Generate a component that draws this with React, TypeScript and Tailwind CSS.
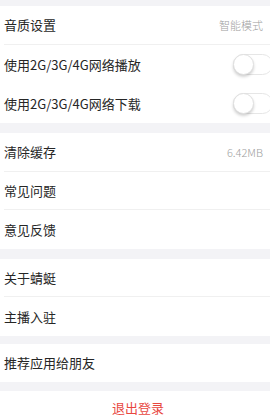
import React from 'react';

const font = { fontFamily: '"Noto Sans CJK SC", "Noto Sans", sans-serif' };

function Toggle() {
  return (
    <div className="relative w-[40px] h-[21px] mr-[-10px] rounded-full border border-[#e6e6e6] bg-white">
      <div className="absolute left-[-1px] top-[-1px] w-[21px] h-[21px] rounded-full bg-white border border-[#e0e0e0] shadow-[0_2px_3px_rgba(0,0,0,0.18)]" />
    </div>
  );
}

function Row({ label, right, toggle, last, h = 'h-[38.5px]' }: { label: string; right?: string; toggle?: boolean; last?: boolean; h?: string }) {
  return (
    <div className="pl-[4px] bg-white">
      <div className={`${h} flex items-center justify-between pr-[7px] ${last ? '' : 'border-b border-[#f0f0f0]'}`}>
        <span className="text-[13px] text-[#262626]">{label}</span>
        {right && <span className="text-[11px] text-[#a0a0a0] font-light">{right}</span>}
        {toggle && <Toggle />}
      </div>
    </div>
  );
}

export default function App() {
  return (
    <div className="w-[270px] h-[419px] overflow-hidden bg-[#f3f3f6]" style={font}>
      <div className="h-[6px]" />
      <Row label="音质设置" right="智能模式" h="h-[39px]" />
      <Row label="使用2G/3G/4G网络播放" toggle last h="h-[39px]" />
      <Row label="使用2G/3G/4G网络下载" toggle last h="h-[39px]" />

      <div className="h-[10px]" />
      <Row label="清除缓存" right="6.42MB" />
      <Row label="常见问题" />
      <Row label="意见反馈" last />

      <div className="h-[10px]" />
      <Row label="关于蜻蜓" />
      <Row label="主播入驻" last />

      <div className="h-[8px]" />
      <Row label="推荐应用给朋友" last h="h-[38px]" />

      <div className="h-[9px]" />
      <div className="h-[40px] bg-white pt-[7px] flex justify-center pl-[6px]">
        <span className="text-[13px] leading-[19px] text-[#e8473f]">退出登录</span>
      </div>
    </div>
  );
}
